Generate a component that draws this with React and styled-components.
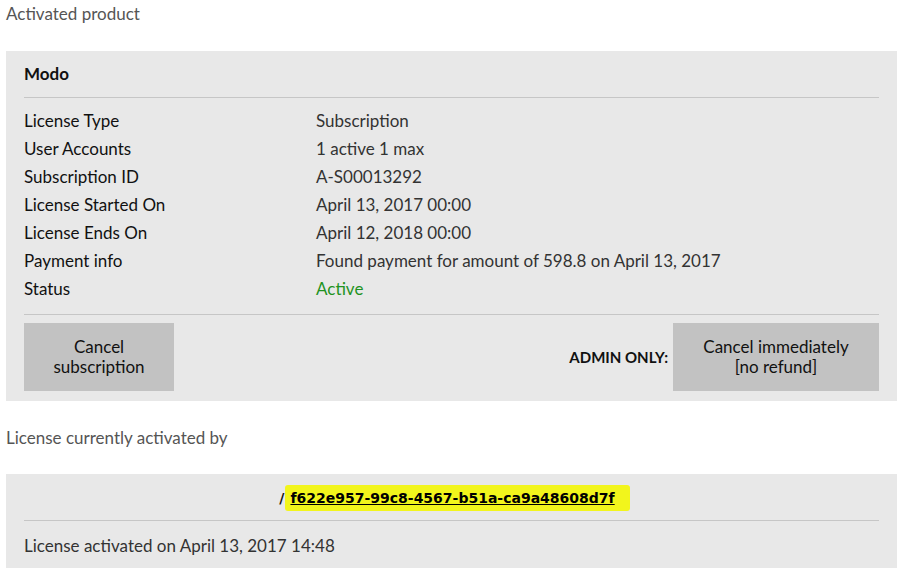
import React from 'react';
import styled, { createGlobalStyle } from 'styled-components';

const Global = createGlobalStyle`
  html, body { margin: 0; padding: 0; background: #fff; }
  body { font-family: Lato, "Open Sans", sans-serif; color: #111; }
`;

const Page = styled.div`
  width: 900px;
  padding: 0 3px 0 6px;
  box-sizing: border-box;
`;

const Heading = styled.div`
  font-size: 17px;
  color: #555;
  height: 28px;
  line-height: 28px;
  margin-top: ${p => p.top || 0}px;
  margin-bottom: ${p => p.bottom}px;
`;

const Panel = styled.div`
  background: #e8e8e8;
  padding: ${p => p.pad || '10px 18px'};
`;

const Title = styled.div`
  font-weight: bold;
  font-size: 17px;
  height: 36px;
  line-height: 26px;
  border-bottom: 1px solid #c6c6c6;
  margin-bottom: 9px;
`;

const Rows = styled.div`
  display: grid;
  grid-template-columns: 292px 1fr;
  font-size: 17px;
  line-height: 28px;
  padding-bottom: 11px;
  border-bottom: 1px solid #c6c6c6;
`;

const Label = styled.div`
  color: #111;
`;

const Value = styled.div`
  color: ${p => p.color || '#333'};
`;

const Actions = styled.div`
  display: flex;
  align-items: center;
  padding-top: 8px;
`;

const Button = styled.button`
  background: #c2c2c2;
  border: none;
  width: ${p => p.w}px;
  height: 68px;
  font-family: inherit;
  font-size: 17px;
  line-height: 20px;
  color: #111;
  padding: 0 6px;
`;

const Spacer = styled.div`
  flex: 1;
`;

const AdminLabel = styled.span`
  font-weight: bold;
  font-size: 15px;
  margin-right: 5px;
`;

const HashLine = styled.div`
  text-align: center;
  height: 47px;
  padding: 10px 0 0 6px;
  line-height: 26px;
  border-bottom: 1px solid #c6c6c6;
  box-sizing: border-box;
`;

const Slash = styled.span`
  font-family: "DejaVu Sans", sans-serif;
  font-weight: bold;
  font-size: 14px;
`;

const Hash = styled.a`
  font-family: "DejaVu Sans", sans-serif;
  font-weight: bold;
  font-size: 14px;
  color: #000;
  text-decoration: underline;
  background: #f2f51c;
  padding: 5px 15px 5px 5px;
  margin-left: 1px;
  border-radius: 3px;
`;

const Footer = styled.div`
  font-size: 17px;
  color: #333;
  padding-top: 2px;
  line-height: 45px;
`;

const rows = [
  ['License Type', 'Subscription'],
  ['User Accounts', '1 active 1 max'],
  ['Subscription ID', 'A-S00013292'],
  ['License Started On', 'April 13, 2017 00:00'],
  ['License Ends On', 'April 12, 2018 00:00'],
  ['Payment info', 'Found payment for amount of 598.8 on April 13, 2017'],
  ['Status', 'Active', '#1f931f'],
];

export default function App() {
  return (
    <Page>
      <Global />
      <Heading bottom={23}>Activated product</Heading>
      <Panel>
        <Title>Modo</Title>
        <Rows>
          {rows.map(([l, v, c]) => (
            <React.Fragment key={l}>
              <Label>{l}</Label>
              <Value color={c}>{v}</Value>
            </React.Fragment>
          ))}
        </Rows>
        <Actions>
          <Button w={150}>Cancel<br />subscription</Button>
          <Spacer />
          <AdminLabel>ADMIN ONLY:</AdminLabel>
          <Button w={206}>Cancel immediately<br />[no refund]</Button>
        </Actions>
      </Panel>
      <Heading top={23} bottom={22}>License currently activated by</Heading>
      <Panel pad="0 18px">
        <HashLine>
          <Slash>/</Slash>
          <Hash href="#">f622e957-99c8-4567-b51a-ca9a48608d7f</Hash>
        </HashLine>
        <Footer>License activated on April 13, 2017 14:48</Footer>
      </Panel>
    </Page>
  );
}
